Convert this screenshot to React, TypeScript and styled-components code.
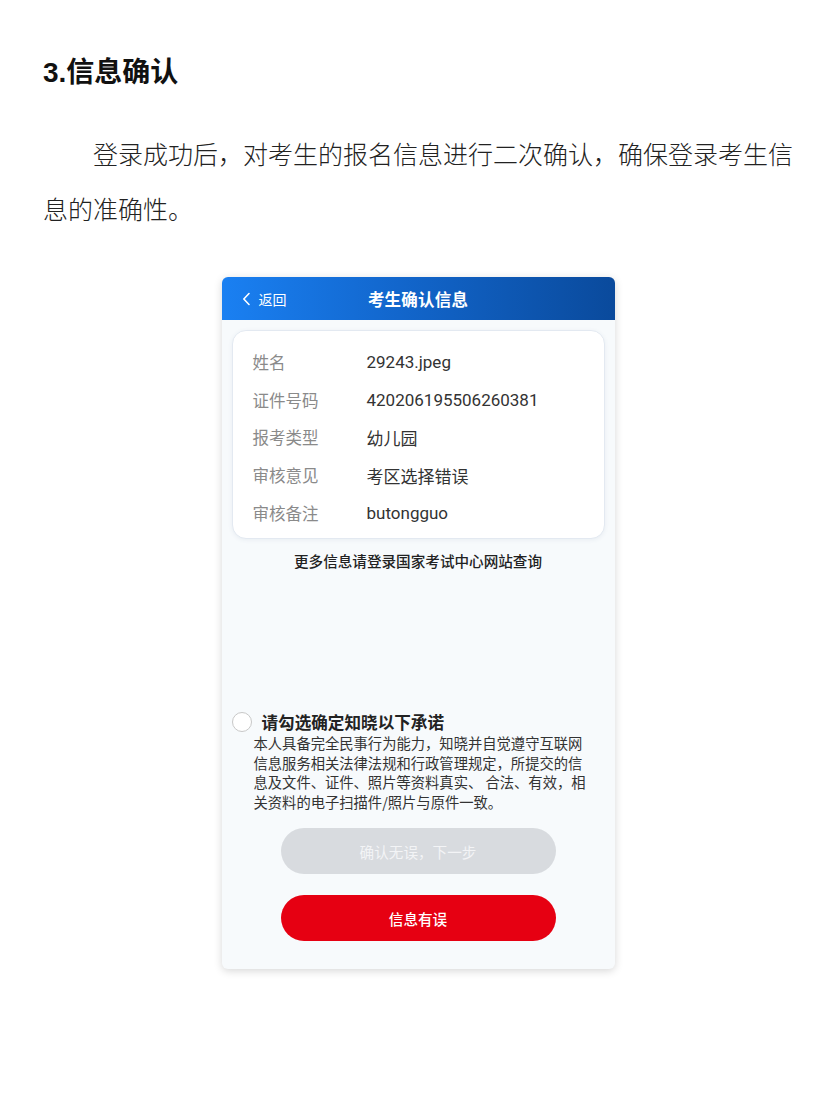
import styled, { createGlobalStyle } from "styled-components";

// 考生信息行数据
interface InfoRow {
  label: string;
  value: string;
}

const rows: InfoRow[] = [
  { label: "姓名", value: "29243.jpeg" },
  { label: "证件号码", value: "420206195506260381" },
  { label: "报考类型", value: "幼儿园" },
  { label: "审核意见", value: "考区选择错误" },
  { label: "审核备注", value: "butongguo" },
];

const GlobalStyle = createGlobalStyle`
  body {
    margin: 0;
    background: #fff;
  }
`;

export default function App() {
  return (
    <>
      <GlobalStyle />
      <Page>
        <Title>3.信息确认</Title>
        <Paragraph>
          登录成功后，对考生的报名信息进行二次确认，确保登录考生信息的准确性。
        </Paragraph>
        <Phone>
          <Header>
            <BackLink>
              <svg width="9" height="14" viewBox="0 0 9 14">
                <polyline
                  points="7,1.5 1.8,7 7,12.5"
                  fill="none"
                  stroke="#fff"
                  strokeWidth="1.6"
                  strokeLinecap="round"
                  strokeLinejoin="round"
                />
              </svg>
              返回
            </BackLink>
            <HeaderTitle>考生确认信息</HeaderTitle>
          </Header>
          <Body>
            <InfoCard>
              {rows.map((row) => (
                <Row key={row.label}>
                  <Label>{row.label}</Label>
                  <Value>{row.value}</Value>
                </Row>
              ))}
            </InfoCard>
            <Note>更多信息请登录国家考试中心网站查询</Note>
            <Agree>
              <CheckRow>
                <Circle />
                <CheckTitle>请勾选确定知晓以下承诺</CheckTitle>
              </CheckRow>
              <Promise>
                本人具备完全民事行为能力，知晓并自觉遵守互联网信息服务相关法律法规和行政管理规定，所提交的信息及文件、证件、照片等资料真实、
                合法、有效，相关资料的电子扫描件/照片与原件一致。
              </Promise>
            </Agree>
            <Buttons>
              <PillButton $variant="disabled">确认无误，下一步</PillButton>
              <PillButton $variant="danger">信息有误</PillButton>
            </Buttons>
          </Body>
        </Phone>
      </Page>
    </>
  );
}

const Page = styled.div`
  width: 750px;
  padding: 56px 0 40px 43px;
`;

const Title = styled.h1`
  margin: 0;
  font-family: "Liberation Sans", "Noto Sans CJK SC", sans-serif;
  font-size: 28px;
  line-height: 34px;
  font-weight: 700;
  color: #111;
`;

const Paragraph = styled.p`
  margin: 38px 0 0;
  font-family: "Liberation Serif", "Noto Sans CJK SC", serif;
  font-size: 25px;
  line-height: 55px;
  font-weight: 300;
  text-indent: 2em;
  color: #222;
`;

const Phone = styled.div`
  width: 393px;
  margin: 39px auto 0;
  background: #f7fafc;
  border-radius: 6px;
  box-shadow: 0 2px 8px rgba(0, 0, 0, 0.16);
  overflow: hidden;
  font-family: "Noto Sans CJK SC", "Noto Sans", sans-serif;
`;

const Header = styled.div`
  position: relative;
  height: 43px;
  display: flex;
  align-items: center;
  justify-content: center;
  background: linear-gradient(90deg, #1a80f2 0%, #1266cc 45%, #0a4a9c 100%);
  color: #fff;
`;

const BackLink = styled.div`
  position: absolute;
  left: 20px;
  top: 0;
  bottom: 0;
  display: flex;
  align-items: center;
  gap: 8px;
  font-size: 14px;
`;

const HeaderTitle = styled.div`
  font-size: 16.5px;
  font-weight: 700;
  letter-spacing: 0.2px;
`;

const Body = styled.div`
  padding: 10px 10px 28px;
`;

const InfoCard = styled.div`
  background: #fff;
  border: 1px solid #e3e9f1;
  border-radius: 14px;
  box-shadow: 0 1px 4px rgba(60, 90, 130, 0.08);
  padding: 12px 20px 6px;
`;

const Row = styled.div`
  display: flex;
  align-items: center;
  height: 37.8px;
  font-size: 16.5px;
`;

const Label = styled.span`
  width: 114px;
  color: #8a8a8a;
`;

const Value = styled.span`
  font-family: Roboto, "Noto Sans CJK SC", sans-serif;
  font-size: 17px;
  color: #333;
`;

const Note = styled.div`
  margin-top: 12px;
  text-align: center;
  font-size: 14.6px;
  line-height: 20px;
  font-weight: 500;
  color: #222;
`;

const Agree = styled.div`
  margin-top: 140px;
`;

const CheckRow = styled.div`
  display: flex;
  align-items: center;
  gap: 10px;
  height: 22px;
`;

const Circle = styled.span`
  width: 20px;
  height: 20px;
  box-sizing: border-box;
  border: 1.5px solid #c8c8c8;
  border-radius: 50%;
  background: #fff;
`;

const CheckTitle = styled.span`
  font-size: 16.6px;
  font-weight: 700;
  color: #222;
`;

const Promise = styled.p`
  margin: 0 0 0 22px;
  width: 340px;
  font-size: 14.3px;
  line-height: 19.6px;
  color: #333;
`;

const Buttons = styled.div`
  margin-top: 17px;
  display: flex;
  flex-direction: column;
  align-items: center;
  gap: 21px;
`;

const PillButton = styled.button<{ $variant: "disabled" | "danger" }>`
  width: 275px;
  height: 46px;
  border: none;
  border-radius: 23px;
  font-family: inherit;
  font-size: 14.6px;
  background: ${(p) => (p.$variant === "danger" ? "#e60012" : "#d8dbdf")};
  color: ${(p) => (p.$variant === "danger" ? "#fff" : "#f3f4f6")};
  font-weight: ${(p) => (p.$variant === "danger" ? 500 : 400)};
`;
